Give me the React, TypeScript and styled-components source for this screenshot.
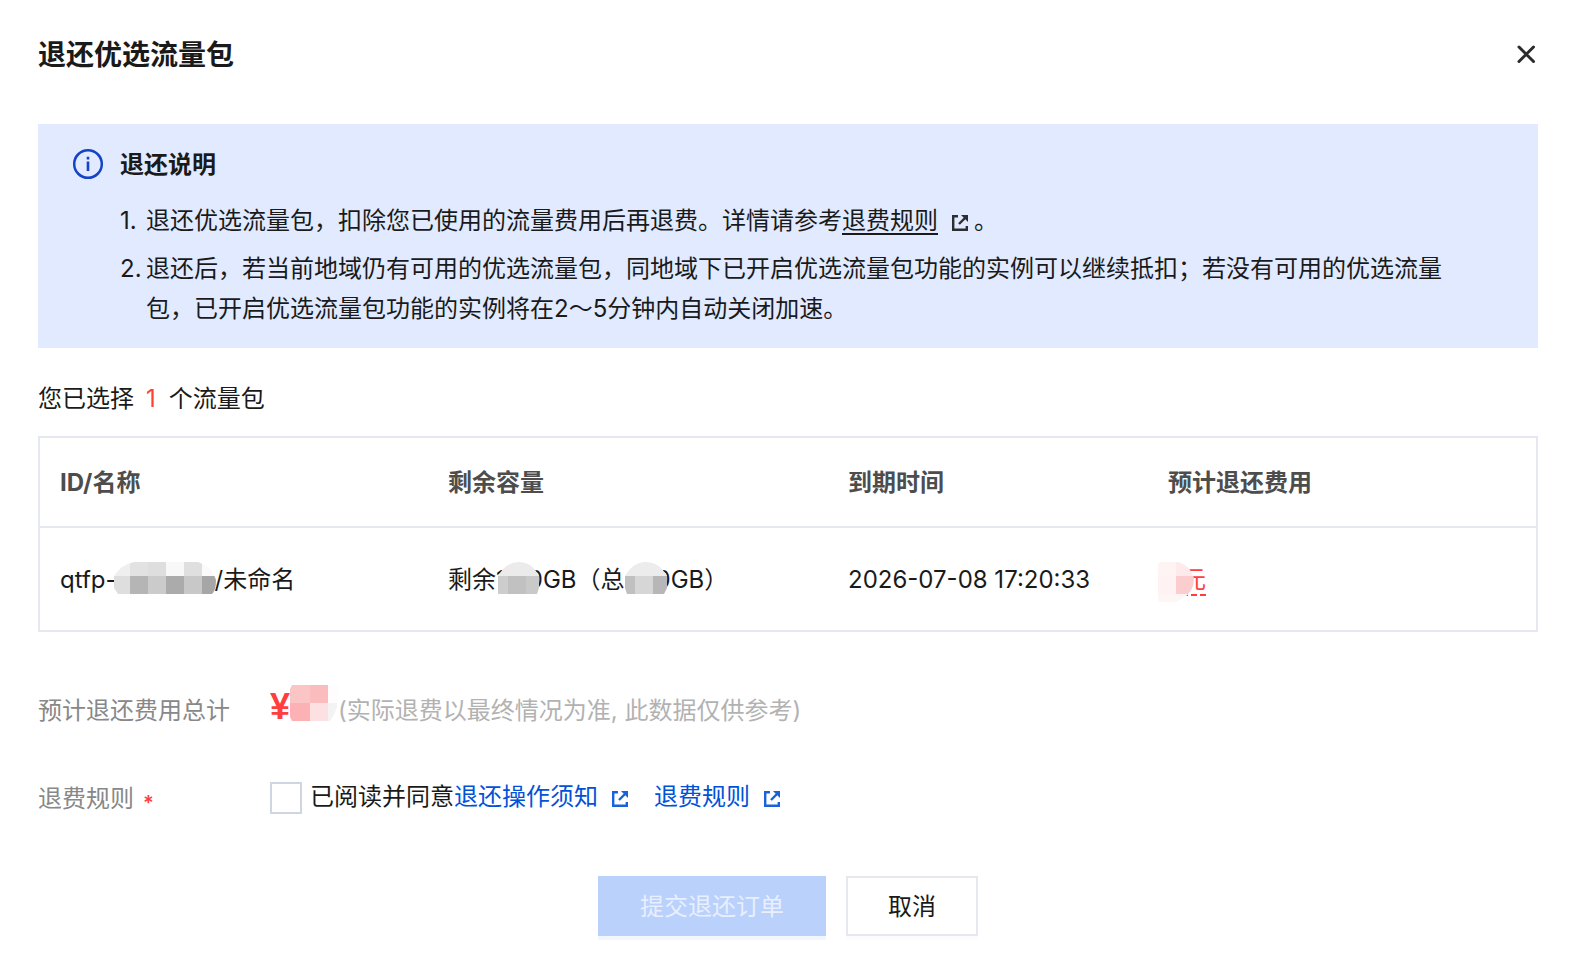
import React from "react";
import styled, { createGlobalStyle } from "styled-components";

const GlobalStyle = createGlobalStyle`
  * { box-sizing: border-box; }
  body {
    margin: 0;
    background: #fff;
    color: #1a1a1a;
    font-family: Inter, "Noto Sans CJK SC", sans-serif;
    font-size: 24px;
    line-height: 40px;
  }
`;

const Dialog = styled.main`
  padding: 35px 44px 38px 38px;
`;

const Header = styled.header`
  display: flex;
  align-items: center;
  justify-content: space-between;
  margin-bottom: 49px;
`;

const Title = styled.h1`
  margin: 0;
  font-size: 28px;
  line-height: 40px;
  font-weight: 700;
`;

const CloseButton = styled.button`
  display: flex;
  padding: 0;
  border: 0;
  background: none;
  color: #2b2b2b;
`;

const Notice = styled.section`
  display: flex;
  align-items: flex-start;
  gap: 16px;
  padding: 21px 76px 19px 34px;
  background: #e1eaff;
`;

const NoticeIcon = styled.svg`
  flex: none;
  width: 32px;
  height: 40px;
`;

const NoticeTitle = styled.h2`
  margin: 0 0 16px;
  font-size: 24px;
  line-height: 40px;
  font-weight: 700;
`;

const NoticeList = styled.ol`
  display: grid;
  gap: 8px;
  margin: 0;
  padding: 0;
  list-style: none;
`;

const NoticeItem = styled.li`
  display: grid;
  grid-template-columns: 26px 1fr;
`;

const Link = styled.a<{ $plain?: boolean }>`
  color: ${(p) => (p.$plain ? "inherit" : "#0052d9")};
  text-decoration: none;
`;

const LinkText = styled.span`
  text-decoration: underline;
  text-decoration-thickness: 2px;
  text-decoration-skip-ink: none;
  text-underline-offset: 4px;
`;

const LinkIcon = styled.svg`
  width: 18px;
  height: 18px;
  margin: 0 5px 0 13px;
  vertical-align: -3px;
  opacity: 0.9;
`;

const Selected = styled.p`
  margin: 31px 0 17px;
`;

const Count = styled.span`
  margin: 0 13px 0 12px;
  color: #ff3e3e;
`;

const Table = styled.table`
  width: 100%;
  table-layout: fixed;
  border-collapse: separate;
  border-spacing: 0;
  border: 2px solid #e5e8f0;
`;

const Th = styled.th<{ $width: string }>`
  width: ${(p) => p.$width};
  height: 90px;
  padding: 2px 20px 0;
  border-bottom: 2px solid #e5e8f0;
  color: #4d4d4d;
  font-weight: 700;
  text-align: left;
`;

const Td = styled.td`
  height: 102px;
  padding: 2px 20px 0;
  white-space: nowrap;
`;

const Masked = styled.span<{ $width: number }>`
  position: relative;
  display: inline-block;
  width: ${(p) => p.$width}px;
  height: 24px;
  vertical-align: baseline;
`;

const Mosaic = styled.svg<{ $left: number; $top: number }>`
  position: absolute;
  left: ${(p) => p.$left}px;
  top: ${(p) => p.$top}px;
`;

const Fee = styled.span`
  color: #ff3e3e;
  border-bottom: 2px dashed currentColor;
`;

const Form = styled.form`
  display: grid;
  margin-top: 59px;
`;

const Field = styled.div`
  display: grid;
  grid-template-columns: 232px 1fr;
  height: 40px;
  margin-bottom: 48px;
`;

const Label = styled.span`
  color: #888;
`;

const Required = styled.span`
  margin-left: 9px;
  color: #ff3e3e;
  font-size: 20px;
  font-weight: 600;
  line-height: 20px;
  vertical-align: -3px;
`;

const Amount = styled.strong`
  color: #ff3e3e;
  font-family: "Liberation Sans", sans-serif;
  font-size: 36px;
  line-height: 32px;
`;

const Note = styled.span`
  color: #b2b2b2;
`;

const Agreement = styled.div`
  display: flex;
  align-items: flex-start;
  padding-top: 3px;
  line-height: 30px;
`;

const Checkbox = styled.input`
  flex: none;
  appearance: none;
  width: 32px;
  height: 32px;
  margin: 0 8px 0 0;
  border: 2px solid #cfd5e2;
  background: #fff;
`;

const Links = styled.span`
  display: inline-flex;
  gap: 20px;
`;

const Actions = styled.div`
  display: flex;
  justify-content: center;
  gap: 20px;
  margin-top: 9px;
`;

const Button = styled.button<{ $primary?: boolean }>`
  height: 60px;
  padding: 2px 40px 0;
  border: 2px solid ${(p) => (p.$primary ? "#bad1fc" : "#e5e8f0")};
  background: ${(p) => (p.$primary ? "#bad1fc" : "#fff")};
  box-shadow: 0 4px 0 ${(p) => (p.$primary ? "#f2f6fe" : "#fcfcfd")};
  color: ${(p) => (p.$primary ? "#e8effe" : "#1a1a1a")};
  font: inherit;
`;

function ExternalIcon() {
  return (
    <LinkIcon viewBox="0 0 18 18" fill="none" stroke="currentColor" strokeWidth="2.4" aria-hidden="true">
      <path d="M7 2.200H2.200V15.800H15.800V12" />
      <path d="M8 10l6-6" />
      <path d="M10 1h7v7z" fill="currentColor" stroke="none" />
    </LinkIcon>
  );
}

type Tile = [number, number, number, number, string];

function Mask({ id, width, height, left, top, shape, tiles }: {
  id: string; width: number; height: number; left: number; top: number; shape: string; tiles: Tile[];
}) {
  return (
    <Mosaic $left={left} $top={top} width={width} height={height} aria-hidden="true" shapeRendering="crispEdges">
      <clipPath id={id}><path d={shape} /></clipPath>
      <g clipPath={`url(#${id})`}>
        {tiles.map(([x, y, w, h, fill]) => (
          <rect key={`${x}-${y}`} x={x} y={y} width={w} height={h} fill={fill} />
        ))}
      </g>
    </Mosaic>
  );
}

const idTiles: Tile[] = [
  [0, 0, 16, 14, "#efefef"], [16, 0, 18, 14, "#e2e2e2"], [34, 0, 18, 14, "#dedede"],
  [52, 0, 18, 14, "#f8f8f8"], [70, 0, 18, 14, "#dfdfdf"], [88, 0, 16, 14, "#fafafa"],
  [0, 14, 16, 18, "#dedede"], [16, 14, 18, 18, "#b5b5b5"], [34, 14, 18, 18, "#cbcbcb"],
  [52, 14, 18, 18, "#ababab"], [70, 14, 18, 18, "#c8c8c8"], [88, 14, 16, 18, "#a6a6a6"],
];
const remainTiles: Tile[] = [
  [0, 0, 42, 14, "#ebebeb"], [0, 14, 10, 18, "#cdcdcd"], [10, 14, 18, 18, "#c1c1c1"], [28, 14, 14, 18, "#c9c9c9"],
];
const totalTiles: Tile[] = [
  [0, 0, 42, 14, "#ececec"], [0, 14, 10, 18, "#c0c0c0"], [10, 14, 18, 18, "#d6d6d6"], [28, 14, 14, 18, "#b7b7b7"],
];
const feeTiles: Tile[] = [
  [0, 0, 18, 14, "#fef4f4"], [18, 0, 18, 14, "#feeaea"], [0, 14, 18, 18, "#fef2f2"],
  [18, 14, 18, 18, "#fccdcf"], [0, 32, 36, 8, "#fef5f5"],
];
const amountTiles: Tile[] = [
  [0, 0, 20, 18, "#fbc5c6"], [20, 0, 18, 18, "#fbbcbd"], [38, 0, 10, 18, "#fefcfc"],
  [0, 18, 20, 18, "#fcb2b4"], [20, 18, 18, 18, "#fde0e2"], [38, 18, 9, 18, "#f3f3f3"],
];

export default function App() {
  return (
    <>
      <GlobalStyle />
      <Dialog>
        <Header>
          <Title>退还优选流量包</Title>
          <CloseButton type="button" aria-label="关闭">
            <svg width="24" height="24" viewBox="0 0 24 24" fill="none" stroke="currentColor" strokeWidth="3" strokeLinecap="round">
              <path d="M5 4l14.500 14.500M19.500 4L5 18.500" />
            </svg>
          </CloseButton>
        </Header>

        <Notice>
          <NoticeIcon viewBox="0 0 32 40" fill="none" stroke="#1443c5" aria-hidden="true">
            <circle cx="16" cy="19" r="13.800" strokeWidth="2.500" />
            <path d="M16 16.500v9.500M16 11.800v2.700" strokeWidth="2.600" />
          </NoticeIcon>
          <div>
            <NoticeTitle>退还说明</NoticeTitle>
            <NoticeList>
              <NoticeItem>
                <span>1.</span>
                <span>
                  退还优选流量包，扣除您已使用的流量费用后再退费。详情请参考
                  <Link href="#rules" $plain><LinkText>退费规则</LinkText><ExternalIcon /></Link>。
                </span>
              </NoticeItem>
              <NoticeItem>
                <span>2.</span>
                <span>
                  退还后，若当前地域仍有可用的优选流量包，同地域下已开启优选流量包功能的实例可以继续抵扣；若没有可用的优选流量包，已开启优选流量包功能的实例将在2～5分钟内自动关闭加速。
                </span>
              </NoticeItem>
            </NoticeList>
          </div>
        </Notice>

        <Selected>您已选择<Count>1</Count>个流量包</Selected>

        <Table>
          <thead>
            <tr>
              <Th $width="388px">ID/名称</Th>
              <Th $width="400px">剩余容量</Th>
              <Th $width="320px">到期时间</Th>
              <Th $width="auto">预计退还费用</Th>
            </tr>
          </thead>
          <tbody>
            <tr>
              <Td>
                qtfp-
                <Masked $width={98}>
                  <Mask id="mask-id" width={104} height={32} left={-3} top={-2} tiles={idTiles}
                    shape="M0 14Q8 2 20 0H84Q98 4 102 18Q102 28 98 32H4L0 26z" />
                </Masked>
                /未命名
              </Td>
              <Td>
                剩余1
                <Masked $width={22}>
                  <Mask id="mask-remain" width={42} height={32} left={-8} top={-2} tiles={remainTiles}
                    shape="M0 14Q8 0 21 0T41 14V26L39 32H0z" />
                </Masked>
                0GB（总
                <Masked $width={31}>
                  <Mask id="mask-total" width={42} height={32} left={0} top={-2} tiles={totalTiles}
                    shape="M0 14Q8 0 21 0T42 14V26L39 32H2L0 26z" />
                </Masked>
                0GB）
              </Td>
              <Td>2026-07-08 17:20:33</Td>
              <Td>
                <Masked $width={14}>
                  <Mask id="mask-fee" width={36} height={40} left={-10} top={-2} tiles={feeTiles}
                    shape="M2 0H20Q32 3 36 16Q36 30 25 36L18 40H2L0 38V2z" />
                </Masked>
                <Fee>元</Fee>
              </Td>
            </tr>
          </tbody>
        </Table>

        <Form>
          <Field>
            <Label>预计退还费用总计</Label>
            <div>
              <Amount>¥</Amount>
              <Masked $width={48}>
                <Mask id="mask-amount" width={48} height={36} left={0} top={-10} tiles={amountTiles}
                  shape="M2 0H48V18Q46 28 40 36H2L0 32V4z" />
              </Masked>
              <Note>(实际退费以最终情况为准, 此数据仅供参考)</Note>
            </div>
          </Field>
          <Field>
            <Label>退费规则<Required>*</Required></Label>
            <Agreement>
              <Checkbox id="agree" type="checkbox" />
              <label htmlFor="agree">已阅读并同意</label>
              <Links>
                <Link href="#notice">退还操作须知<ExternalIcon /></Link>
                <Link href="#rules">退费规则<ExternalIcon /></Link>
              </Links>
            </Agreement>
          </Field>
          <Actions>
            <Button type="submit" disabled $primary>提交退还订单</Button>
            <Button type="button">取消</Button>
          </Actions>
        </Form>
      </Dialog>
    </>
  );
}
